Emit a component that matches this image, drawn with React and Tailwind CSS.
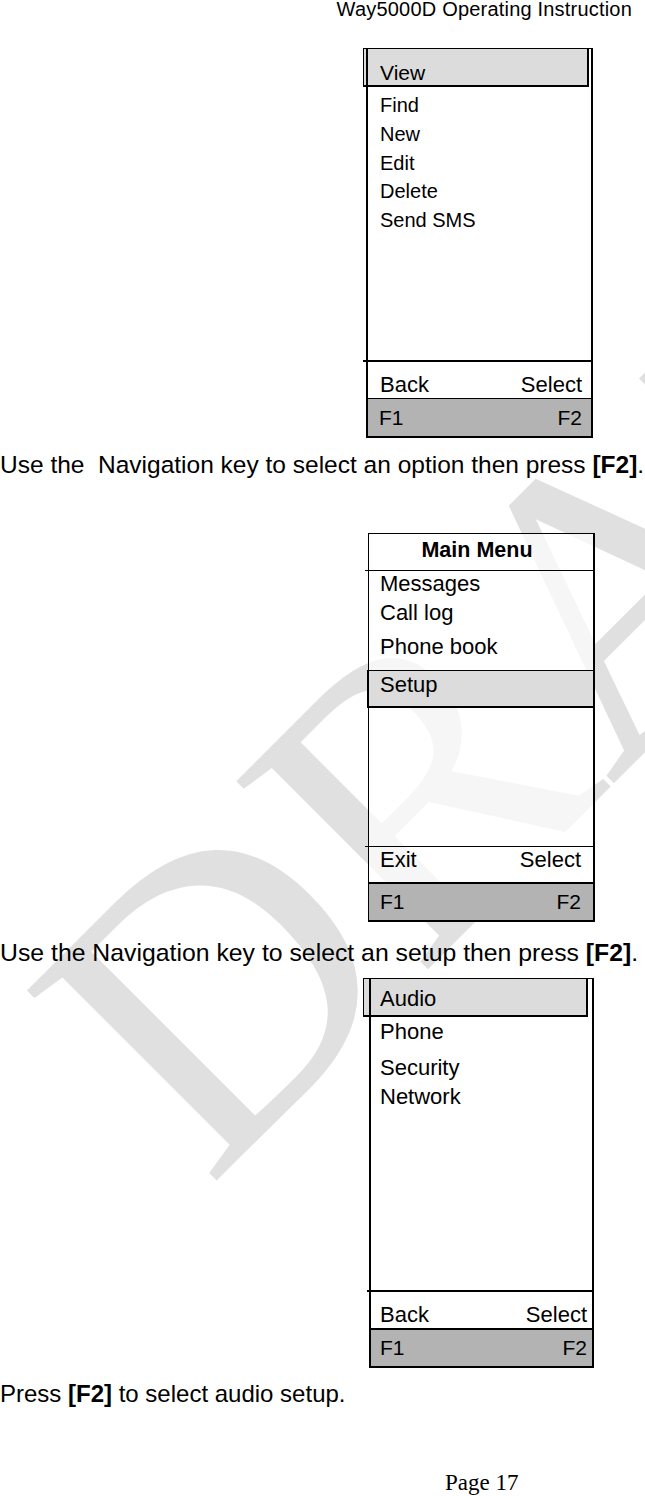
import React from 'react';

const sans = { fontFamily: '"Liberation Sans", Arial, sans-serif' };

// screen 1: contact options
function OptionsScreen() {
  const items = ['New', 'Edit', 'Delete', 'Send SMS'];
  return (
    <div className="ml-[363px] w-[230px] border-t border-r-2 border-black bg-white/70">
      <div className="mr-[2px] h-[38px] border-l border-r-2 border-b-2 border-black bg-[#dcdcdc]">
        <div className="ml-[2px] h-full border-l-2 border-black pl-[12px] pt-[12px] text-[21px] leading-[24px]">View</div>
      </div>
      <div className="ml-[3px] h-[273px] border-l-2 border-black pl-[12px] pt-[3px] text-[20px]">
        <div className="leading-[30px]">Find</div>
        {items.map((t) => (
          <div key={t} className="leading-[28.5px]">{t}</div>
        ))}
      </div>
      <div className="h-[2px] bg-black" />
      <div className="ml-[3px] flex h-[36px] justify-between border-l-2 border-black pl-[12px] pr-[9px] pt-[11px] text-[22px] leading-[24px]">
        <span>Back</span>
        <span>Select</span>
      </div>
      <div className="ml-[3px] flex h-[40px] items-center justify-between border-l-2 border-t border-b-2 border-black bg-[#b3b3b3] pl-[11px] pr-[9px] text-[21px]">
        <span>F1</span>
        <span>F2</span>
      </div>
    </div>
  );
}

// screen 2: main menu
function MainMenuScreen() {
  return (
    <div className="ml-[365px] w-[230px]">
      <div className="ml-[3px] h-[37px] border-l border-t border-r-2 border-black bg-white/70 pr-[8px] pt-[1px] text-center text-[21.5px] font-bold leading-[30px]">
        Main Menu
      </div>
      <div className="h-px bg-black" />
      <div className="ml-[3px] h-[99px] border-l border-r-2 border-black bg-white/70 pl-[11px] text-[22px]">
        <div className="leading-[26px]">Messages</div>
        <div className="leading-[32px]">Call log</div>
        <div className="leading-[36px]">Phone book</div>
      </div>
      <div className="ml-[2px] h-[38px] border-l-2 border-t border-r-2 border-b-2 border-black bg-[#dcdcdc] pl-[11px] pt-[2px] text-[22px] leading-[24px]">
        Setup
      </div>
      <div className="ml-[3px] h-[138px] border-l border-r-2 border-black bg-white/70" />
      <div className="h-px bg-black" />
      <div className="ml-[3px] flex h-[35px] justify-between border-l border-r-2 border-black bg-white/70 pl-[11px] pr-[12px] pt-[1px] text-[22px] leading-[24px]">
        <span>Exit</span>
        <span>Select</span>
      </div>
      <div className="ml-[3px] flex h-[40px] items-center justify-between border-l border-t-2 border-r-2 border-b-2 border-black bg-[#b3b3b3] pl-[11px] pr-[12px] text-[21px]">
        <span>F1</span>
        <span>F2</span>
      </div>
    </div>
  );
}

// screen 3: setup menu
function SetupScreen() {
  return (
    <div className="ml-[363px] w-[231px] border-t border-r-2 border-black bg-white/70">
      <div className="mr-[4px] h-[38px] border-l border-r-2 border-b-2 border-black bg-[#dcdcdc]">
        <div className="ml-[5px] h-full border-l-2 border-black pl-[9px] pt-[8px] text-[22px] leading-[24px]">Audio</div>
      </div>
      <div className="ml-[6px] h-[273px] border-l-2 border-black pl-[9px] text-[22px]">
        <div className="leading-[30px]">Phone</div>
        <div className="mt-[6px] leading-[30px]">Security</div>
        <div className="leading-[28px]">Network</div>
      </div>
      <div className="ml-[4px] h-[2px] bg-black" />
      <div className="ml-[6px] flex h-[36px] justify-between border-l-2 border-black pl-[9px] pr-[5px] pt-[11px] text-[22px] leading-[24px]">
        <span>Back</span>
        <span>Select</span>
      </div>
      <div className="ml-[6px] flex h-[40px] items-center justify-between border-l-2 border-t-2 border-b-2 border-black bg-[#b3b3b3] pl-[9px] pr-[5px] text-[21px]">
        <span>F1</span>
        <span>F2</span>
      </div>
    </div>
  );
}

export default function App() {
  return (
    <div className="relative h-[1496px] w-[645px] overflow-hidden bg-white text-black" style={sans}>
      {/* DRAFT watermark */}
      <div
        className="pointer-events-none absolute left-[586px] top-[616px] -translate-x-1/2 -translate-y-1/2 rotate-[-45deg] whitespace-nowrap text-[410px] leading-none text-[#e0e0e0] select-none"
        style={{ fontFamily: '"Liberation Serif", "Times New Roman", serif' }}
      >
        DRAFT
      </div>

      <div className="relative">
        <div className="h-[20px] pr-[13px] text-right text-[20px] leading-[18px] tracking-[0.2px]">
          Way5000D Operating Instruction
        </div>

        <div className="mt-[28px]">
          <OptionsScreen />
        </div>

        <p className="mt-[13px] text-[24.5px] leading-[28px]">
          Use the&nbsp; Navigation key to select an option then press <b>[F2]</b>.
        </p>

        <div className="mt-[54px]">
          <MainMenuScreen />
        </div>

        <p className="mt-[17px] text-[24.8px] leading-[28px]">
          Use the Navigation key to select an setup then press <b>[F2]</b>.
        </p>

        <div className="mt-[11px]">
          <SetupScreen />
        </div>

        <p className="mt-[12px] text-[24px] leading-[28px]">
          Press <b>[F2]</b> to select audio setup.
        </p>

        <div
          className="mt-[62px] pl-[445px] text-[23px] leading-[26px]"
          style={{ fontFamily: '"Liberation Serif", "Times New Roman", serif' }}
        >
          Page 17
        </div>
      </div>
    </div>
  );
}
